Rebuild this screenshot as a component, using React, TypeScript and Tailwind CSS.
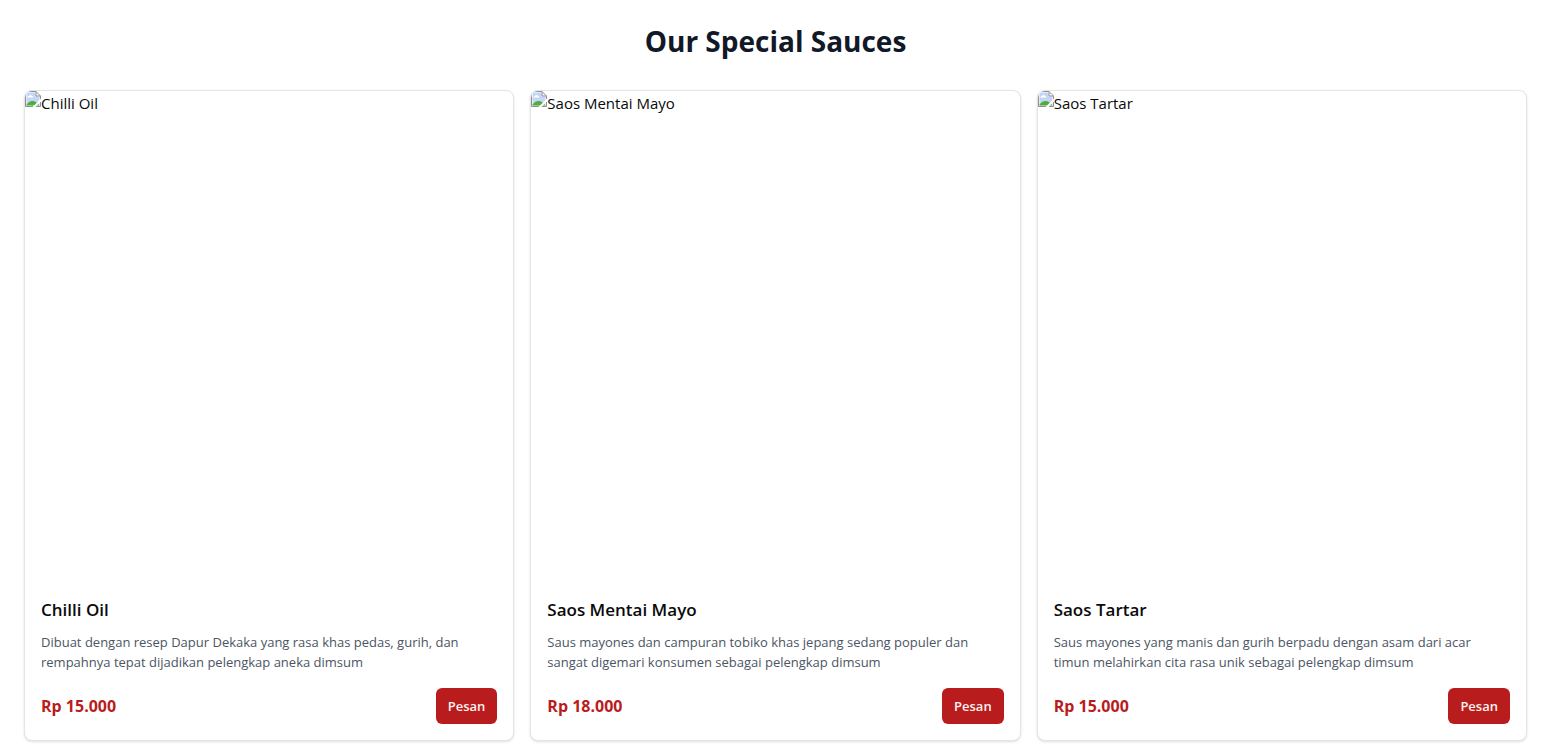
type Sauce = {
  name: string;
  lines: [string, string];
  price: string;
};

const sauces: Sauce[] = [
  {
    name: "Chilli Oil",
    lines: [
      "Dibuat dengan resep Dapur Dekaka yang rasa khas pedas, gurih, dan",
      "rempahnya tepat dijadikan pelengkap aneka dimsum",
    ],
    price: "Rp 15.000",
  },
  {
    name: "Saos Mentai Mayo",
    lines: [
      "Saus mayones dan campuran tobiko khas jepang sedang populer dan",
      "sangat digemari konsumen sebagai pelengkap dimsum",
    ],
    price: "Rp 18.000",
  },
  {
    name: "Saos Tartar",
    lines: [
      "Saus mayones yang manis dan gurih berpadu dengan asam dari acar",
      "timun melahirkan cita rasa unik sebagai pelengkap dimsum",
    ],
    price: "Rp 15.000",
  },
];

function MissingImageIcon() {
  return (
    <svg className="size-4 shrink-0" viewBox="0 0 16 16" aria-hidden="true">
      <path d="M0.5 0.5H11L15.5 5V15.5H0.5Z" fill="#fff" />
      <path d="M1.5 1.5H10.5V5.5H14.5V14.5H1.5Z" fill="#c3d5f8" />
      <path d="M2.5 6.5C2.5 5.3 3.3 4.9 4 4.9C4.4 3.6 6.5 3.6 7 5C8 5 8.4 5.7 8.4 6.5Z" fill="#fff" />
      <path d="M1.5 14.5V13.5C3.5 11 5.5 10 7.5 10C10 10 12.5 11.5 14.5 14.5Z" fill="#4fae35" />
      <path d="M0.5 15.5V0.5H11L15.5 5V15.5ZM11 0.5V5H15.5" fill="none" stroke="#8f8f8f" />
      <path d="M16 7.5V10.5L10.5 16H7.5Z" fill="#fff" />
    </svg>
  );
}

function SauceCard({ name, lines, price }: Sauce) {
  return (
    <article className="flex flex-col overflow-hidden rounded-lg border border-[#e5e5e5] bg-white shadow-sm">
      <div className="flex aspect-square items-start">
        <MissingImageIcon />
        <span className="text-[15px] leading-6">{name}</span>
      </div>
      <div className="flex flex-col px-4 pt-[17px] pb-4">
        <h3 className="text-[17px] leading-7 font-semibold">{name}</h3>
        <p className="mt-2 text-[13px] leading-5 text-[#4b5563]">
          {lines[0]}
          <br />
          {lines[1]}
        </p>
        <div className="mt-4 flex items-center justify-between">
          <span className="text-base leading-6 font-bold text-[#b91c1c]">{price}</span>
          <button
            type="button"
            className="h-9 rounded-md bg-[#b91c1c] px-3 text-[13px] font-semibold text-[#fef2f2]"
          >
            Pesan
          </button>
        </div>
      </div>
    </article>
  );
}

export default function App() {
  return (
    <main className="bg-white pt-[23px] pr-5 pb-4 pl-6 font-['Open_Sans','Noto_Sans',sans-serif] text-[#0a0a0a]">
      <h2 className="mb-[31px] text-center text-[28px] leading-9 font-bold text-[#111827]">
        Our Special Sauces
      </h2>
      <div className="grid grid-cols-3 gap-4">
        {sauces.map((sauce) => (
          <SauceCard key={sauce.name} {...sauce} />
        ))}
      </div>
    </main>
  );
}
